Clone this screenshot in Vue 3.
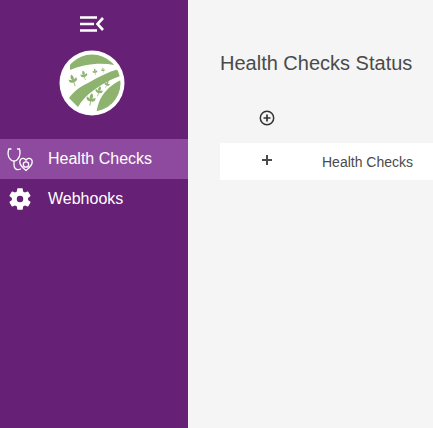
<template>
  <div class="page">
    <aside class="sidebar">
      <div class="brand">
        <button class="toggle" aria-label="Collapse menu">
          <svg width="24" height="16" viewBox="0 0 24 16">
            <path d="M0 1.500h17M0 8h14M0 14.500h17" stroke="#fff" stroke-width="2.600" fill="none" />
            <path d="M23 2 L17.500 8 L23 14" stroke="#fff" stroke-width="2.600" fill="none" />
          </svg>
        </button>
        <div class="logo">
          <svg width="66" height="66" viewBox="0 0 66 66">
            <defs>
              <clipPath id="logo-clip">
                <circle cx="33" cy="33" r="28.500" />
              </clipPath>
            </defs>
            <circle cx="33" cy="33" r="32.500" fill="#fff" />
            <g clip-path="url(#logo-clip)" fill="#8db36f">
              <path d="M11 20 C22 15 40 12 55 15 L55 0 L11 0Z" />
              <path d="M10 48 C15 41 22 36 29 33 C39 27 49 22 60 19 L64 25 C52 29 43 34 35 40 C28 45 23 50 19 57Z" />
              <path d="M37.500 62 C39 53 42 46 47 41 C51 36 57 32 64 29 L70 70 L37.500 70Z" />
            </g>
            <g fill="#8db36f">
              <path v-for="leaf in leaves" :key="leaf.x" :d="leafPath(leaf)" />
            </g>
          </svg>
        </div>
      </div>
      <nav class="menu">
        <a class="item active">
          <svg class="icon" width="28" height="28" viewBox="0 0 28 28" fill="none" stroke="#fff" stroke-width="1.300" stroke-linecap="round">
            <path d="M5 4 H2.800 C1.500 8 2 12 4.500 14.500 C6.500 16.500 9.500 16.500 11.500 14.500 C14 12 14.500 8 13.500 4 H11.500" />
            <path d="M8 16 V20 C8 24 11 25.500 14.500 24" />
            <path d="M20 25.500 C15.500 22 13.500 19.500 13.800 16.500 C14.200 13 18.500 12.300 20 15.300 C21.500 12.300 25.800 13 26.200 16.500 C26.500 19.500 24.500 22 20 25.500Z" />
            <circle cx="20" cy="19.500" r="2.700" />
          </svg>
          <span>Health Checks</span>
        </a>
        <a class="item">
          <svg class="icon gear" width="26" height="26" viewBox="0 0 24 24">
            <path fill="#fff" d="M19.400 13c.04-.33.06-.66.06-1s-.02-.67-.06-1l2.100-1.650a.5.5 0 0 0 .12-.64l-2-3.460a.5.5 0 0 0-.61-.22l-2.490 1a7.300 7.300 0 0 0-1.690-.98l-.38-2.650A.49.49 0 0 0 14 2h-4a.49.49 0 0 0-.49.42l-.38 2.650c-.61.25-1.170.59-1.690.98l-2.490-1a.49.49 0 0 0-.61.22l-2 3.460a.49.49 0 0 0 .12.64L4.560 11c-.04.33-.06.67-.06 1s.02.67.06 1l-2.100 1.650a.5.5 0 0 0-.12.64l2 3.460c.12.22.39.3.61.22l2.490-1c.52.4 1.080.73 1.690.98l.38 2.650c.03.24.24.42.49.42h4c.25 0 .46-.18.49-.42l.38-2.650c.61-.25 1.170-.59 1.690-.98l2.490 1c.23.09.49 0 .61-.22l2-3.460a.5.5 0 0 0-.12-.64L19.400 13zM12 15a3 3 0 1 1 0-6 3 3 0 0 1 0 6z" />
          </svg>
          <span>Webhooks</span>
        </a>
      </nav>
    </aside>
    <main class="content">
      <h1>Health Checks Status</h1>
      <div class="table">
        <div class="row head">
          <div class="cell-toggle">
            <svg width="16" height="16" viewBox="0 0 16 16" fill="none" stroke="#333" stroke-width="1.500">
              <circle cx="8" cy="8" r="6.700" />
              <path d="M4.500 8h7M8 4.500v7" stroke-width="1.700" />
            </svg>
          </div>
        </div>
        <div class="row body">
          <div class="cell-toggle">
            <svg width="12" height="12" viewBox="0 0 12 12" stroke="#4a4a4a" stroke-width="2">
              <path d="M1 6h10M6 1v10" />
            </svg>
          </div>
          <div class="name">Health Checks</div>
        </div>
      </div>
    </main>
  </div>
</template>

<script setup>
const leaves = [
  { x: 14, y: 30, s: 0.8, r: -20 },
  { x: 25, y: 25, s: 0.65, r: -15 },
  { x: 36, y: 21.500, s: 0.45, r: -10 },
  { x: 44, y: 20, s: 0.35, r: -5 },
  { x: 32, y: 49, s: 0.85, r: 10 },
  { x: 40, y: 41, s: 0.7, r: 15 },
  { x: 48, y: 34, s: 0.5, r: 20 },
]

function leafPath({ x, y, s, r }) {
  const a = (r * Math.PI) / 180
  const p = (dx, dy) => {
    const px = x + (dx * Math.cos(a) - dy * Math.sin(a)) * s
    const py = y + (dx * Math.sin(a) + dy * Math.cos(a)) * s
    return `${px.toFixed(2)} ${py.toFixed(2)}`
  }
  return `M${p(0, -7)} C${p(3, -4)} ${p(2, -1)} ${p(0.5, 0)} L${p(5, -2)} C${p(6, 1)} ${p(4, 3)} ${p(0.5, 3)} L${p(0.5, 8)} L${p(-0.5, 8)} L${p(-0.5, 3)} C${p(-4, 3)} ${p(-6, 1)} ${p(-5, -2)} L${p(-0.5, 0)} C${p(-2, -1)} ${p(-3, -4)} ${p(0, -7)}Z`
}
</script>

<style scoped>
.page {
  display: flex;
  height: 428px;
  overflow: hidden;
  font-family: "Liberation Sans", Arial, sans-serif;
  background: #f5f5f5;
}
.sidebar {
  width: 188px;
  flex: none;
  background: #662076;
  display: flex;
  flex-direction: column;
}
.brand {
  width: 184px;
  display: flex;
  flex-direction: column;
  align-items: center;
}
.toggle {
  margin-top: 16px;
  padding: 0;
  height: 16px;
  border: 0;
  background: none;
  line-height: 0;
}
.logo {
  margin-top: 18px;
  line-height: 0;
}
.menu {
  margin-top: 23px;
  display: flex;
  flex-direction: column;
}
.item {
  height: 40px;
  display: flex;
  align-items: center;
  color: #fff;
  font-size: 16px;
}
.item.active {
  background: #8e4a9e;
}
.icon {
  flex: none;
  margin-left: 6px;
  margin-right: 14px;
}
.icon.gear {
  margin-left: 7px;
  margin-right: 15px;
}
.content {
  flex: none;
  width: 245px;
  padding: 0 0 0 32px;
  box-sizing: border-box;
}
h1 {
  margin: 51px 0 0;
  font-size: 20px;
  font-weight: 400;
  line-height: 24px;
  color: #4a4a4a;
  white-space: nowrap;
}
.table {
  margin-top: 18px;
}
.row {
  display: flex;
  align-items: center;
}
.head {
  height: 50px;
}
.body {
  height: 37px;
  background: #fff;
}
.cell-toggle {
  width: 94px;
  padding-left: 39px;
  box-sizing: border-box;
  line-height: 0;
  flex: none;
}
.body .cell-toggle {
  padding-left: 41px;
  margin-top: -3px;
  width: 102px;
}
.name {
  font-size: 14px;
  color: #4a4a4a;
  white-space: nowrap;
}
</style>
